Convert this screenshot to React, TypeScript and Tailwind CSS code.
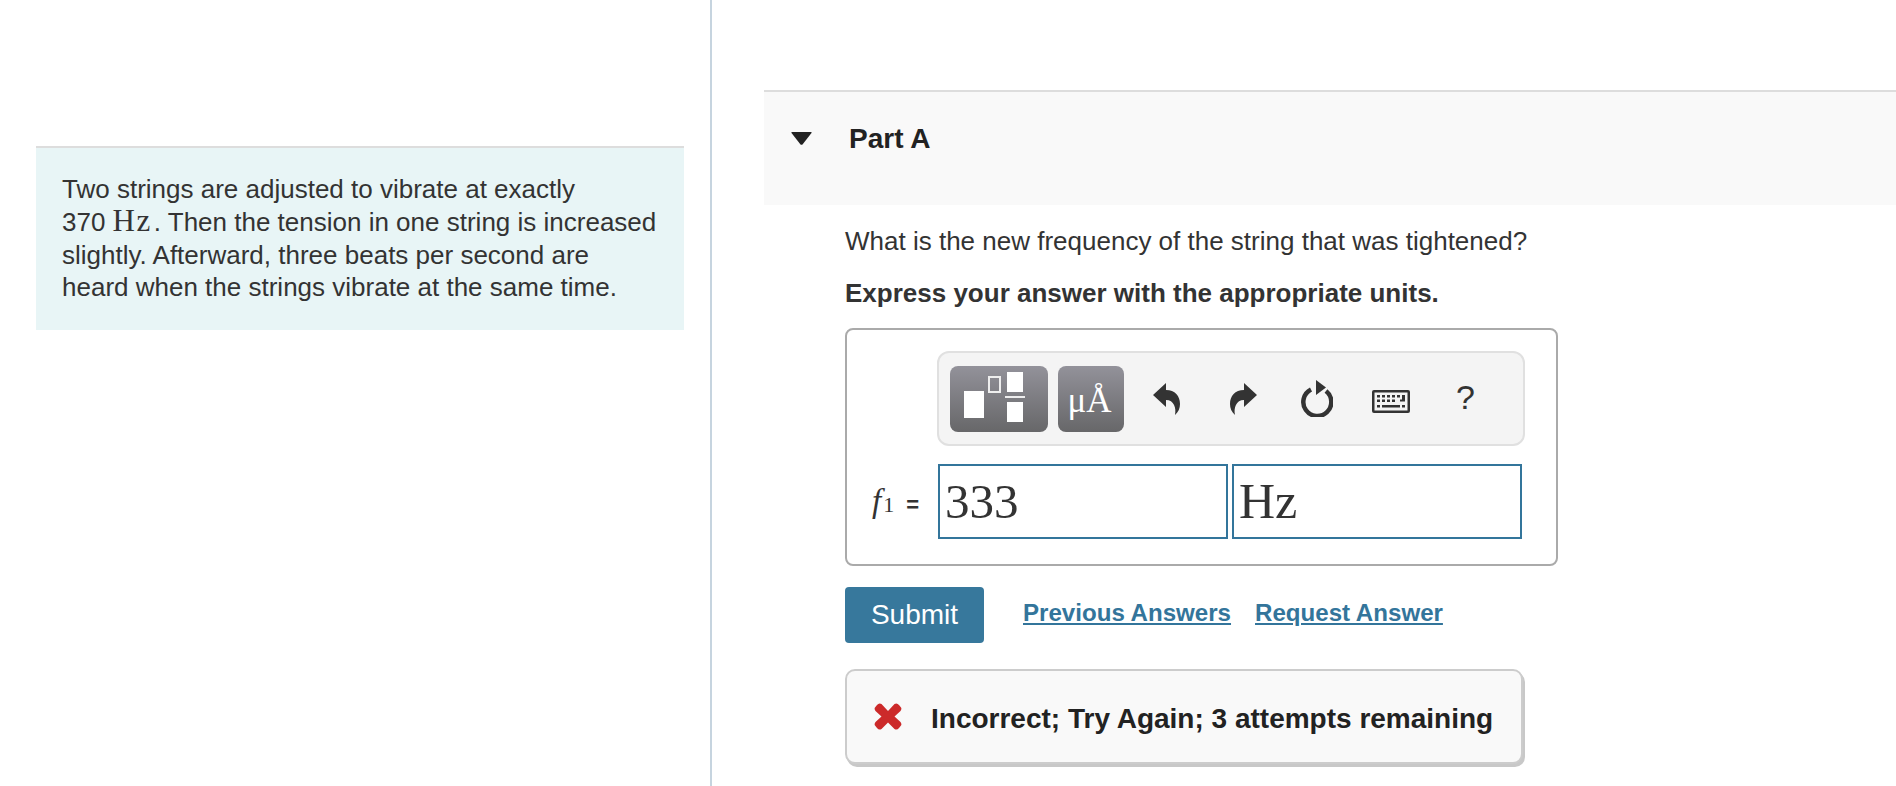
const SANS = "font-['Liberation_Sans',Arial,sans-serif]";
const SERIF = "font-['Liberation_Serif','Times_New_Roman',serif]";

function TemplatesIcon() {
  return (
    <svg width="98" height="66" viewBox="0 0 98 66" fill="none">
      <rect x="14" y="25" width="20" height="27" fill="#fff" />
      <rect x="39" y="11" width="11" height="15" stroke="#eeeeee" strokeWidth="2" />
      <rect x="57" y="6" width="16" height="20" fill="#fff" />
      <rect x="55" y="30" width="20" height="2" fill="#eeeeee" />
      <rect x="57" y="36" width="16" height="20" fill="#fff" />
    </svg>
  );
}

function UndoIcon({ flip = false }: { flip?: boolean }) {
  return (
    <svg width="27" height="32" viewBox="0 0 27 32" className={flip ? '-scale-x-100' : ''}>
      <path
        d="M0 12 L13 0 L13 7 C22 7 27 13 27 21 C27 25 25.500 29 22 32 C23.500 25 21 17 13 17 L13 24 Z"
        fill="#333"
      />
    </svg>
  );
}

function ResetIcon() {
  return (
    <svg width="33" height="37" viewBox="0 0 33 37" fill="none">
      <path d="M11 9.500 A14 14 0 1 0 26 11" stroke="#333" strokeWidth="4.500" />
      <path d="M16 0 L26 7.500 L16 15 Z" fill="#333" />
    </svg>
  );
}

function KeyboardIcon() {
  return (
    <svg width="38" height="23" viewBox="0 0 38 23" fill="#333">
      <path fillRule="evenodd" d="M2 0 H36 A2 2 0 0 1 38 2 V21 A2 2 0 0 1 36 23 H2 A2 2 0 0 1 0 21 V2 A2 2 0 0 1 2 0 Z M2.500 2.500 V20.500 H35.500 V2.500 Z" />
      <path d="M5 5h3v2.500H5zM10 5h3v2.500h-3zM15 5h3v2.500h-3zM20 5h3v2.500h-3zM25 5h3v2.500h-3zM30 5h3v6.500h-5V9.500h2zM5 9.500h3v2.500H5zM10 9.500h3v2.500h-3zM15 9.500h3v2.500h-3zM20 9.500h3v2.500h-3zM5 15h3v2.500H5zM10 15h18v2.500H10zM30 15h3v2.500h-3z" />
    </svg>
  );
}

function CrossIcon() {
  return (
    <svg width="28" height="27" viewBox="0 0 28 27">
      <path
        d="M3 2 Q5 -0.500 7.500 1 L14 8 L20.500 1 Q23 -0.500 25 2 L27 4.500 Q28 6 26.500 8 L20.500 13.500 L26.500 19 Q28 21 27 22.500 L25 25 Q23 27.500 20.500 26 L14 19.500 L7.500 26 Q5 27.500 3 25 L1 22.500 Q0 21 1.500 19 L7.500 13.500 L1.500 8 Q0 6 1 4.500 Z"
        fill="#cc2a2a"
      />
    </svg>
  );
}

export default function App() {
  return (
    <div className={`${SANS} flex h-[786px] w-[1896px] overflow-hidden bg-white text-[#333]`}>
      {/* Intro */}
      <aside className="h-full w-[712px] shrink-0 border-r-2 border-[#c6d4df] pt-[146px] pl-[36px] pr-[26px]">
        <div className="h-[184px] border-t-2 border-[#dddddd] bg-[#e8f5f6] pt-[25px] pl-[26px] text-[26px] leading-[32.400px]">
          Two strings are adjusted to vibrate at exactly
          <br />
          370 <span className={`${SERIF} mr-[2px] text-[31px] tracking-[1.500px]`}>Hz</span>. Then the tension in one string is increased
          <br />
          slightly. Afterward, three beats per second are
          <br />
          heard when the strings vibrate at the same time.
        </div>
      </aside>

      <main className="flex-1 pt-[90px] pl-[52px]">
        {/* Part header */}
        <div className="flex h-[115px] items-start border-t-2 border-[#dddddd] bg-[#f9f9f9] pt-[31px]">
          <svg width="21" height="13" viewBox="0 0 21 13" className="mt-[9px] ml-[27px]">
            <path d="M1 0 H20 Q21 0 20.500 1 L11.500 12.500 Q10.500 13 9.500 12.500 L0.500 1 Q0 0 1 0 Z" fill="#222" />
          </svg>
          <h2 className="ml-[37px] text-[28px] leading-[32px] font-bold text-[#222]">Part A</h2>
        </div>

        <div className="pl-[81px]">
          <p className="mt-[19px] text-[26px] leading-[34px]">What is the new frequency of the string that was tightened?</p>
          <p className="mt-[18px] text-[26px] leading-[34px] font-bold">Express your answer with the appropriate units.</p>

          {/* Answer box */}
          <div className="mt-[18px] h-[238px] w-[713px] rounded-[8px] border-2 border-[#aaaaaa] pt-[21px] pl-[90px]">
            <div className="flex h-[95px] w-[588px] items-center rounded-[12px] border-2 border-[#e0e0e0] bg-[#f4f4f4] pl-[11px]">
              <div className="flex h-[66px] w-[98px] rounded-[8px] bg-gradient-to-b from-[#93929a] to-[#676769]">
                <TemplatesIcon />
              </div>
              <div className={`${SERIF} ml-[10px] flex h-[66px] w-[66px] items-end justify-center rounded-[8px] bg-gradient-to-b from-[#93929a] to-[#676769] pr-[3px] pb-[11px] text-[35px] leading-[40px] text-white`}>
                μÅ
              </div>
              <div className="ml-[29px]"><UndoIcon /></div>
              <div className="ml-[50px]"><UndoIcon flip /></div>
              <div className="ml-[43px]"><ResetIcon /></div>
              <div className="ml-[39px] mt-[6px]"><KeyboardIcon /></div>
              <span className="ml-[46px] -mt-[4px] text-[34px] leading-[40px] text-[#333]">?</span>
            </div>

            <div className="mt-[18px] ml-[1px] flex h-[75px] w-[585px] items-center">
              <div className={`${SERIF} -ml-[66px] mr-[3px] flex w-[63px] shrink-0 items-baseline text-[#333]`}>
                <i className="text-[33px]">f</i>
                <span className="ml-[2px] text-[22px]">1</span>
                <span className={`${SANS} ml-[12px] text-[22px] font-bold`}>=</span>
              </div>
              <div className={`${SERIF} flex h-[75px] w-[290px] items-center border-2 border-[#33759b] pl-[5px] text-[49px] text-[#333]`}>333</div>
              <div className={`${SERIF} ml-[4px] flex h-[75px] w-[290px] items-center border-2 border-[#33759b] pl-[5px] text-[50px] text-[#333]`}>Hz</div>
            </div>
          </div>

          {/* Actions */}
          <div className="mt-[21px] flex items-start">
            <button className="h-[56px] w-[139px] rounded-[4px] bg-[#37789c] text-[28px] text-white">Submit</button>
            <a className="ml-[39px] mt-[10px] text-[24.100px] leading-[32px] font-bold text-[#33759b] underline">Previous Answers</a>
            <a className="ml-[24px] mt-[10px] text-[24.100px] leading-[32px] font-bold text-[#33759b] underline">Request Answer</a>
          </div>

          {/* Feedback */}
          <div className="mt-[26px] flex h-[95px] w-[678px] items-center rounded-[10px] border-2 border-[#cccccc] bg-[#f9f9f9] pl-[27px] shadow-[2px_3px_0_#c8c8c8]">
            <CrossIcon />
            <span className="ml-[29px] mt-[4px] text-[28px] font-bold text-[#222]">Incorrect; Try Again; 3 attempts remaining</span>
          </div>
        </div>
      </main>
    </div>
  );
}
